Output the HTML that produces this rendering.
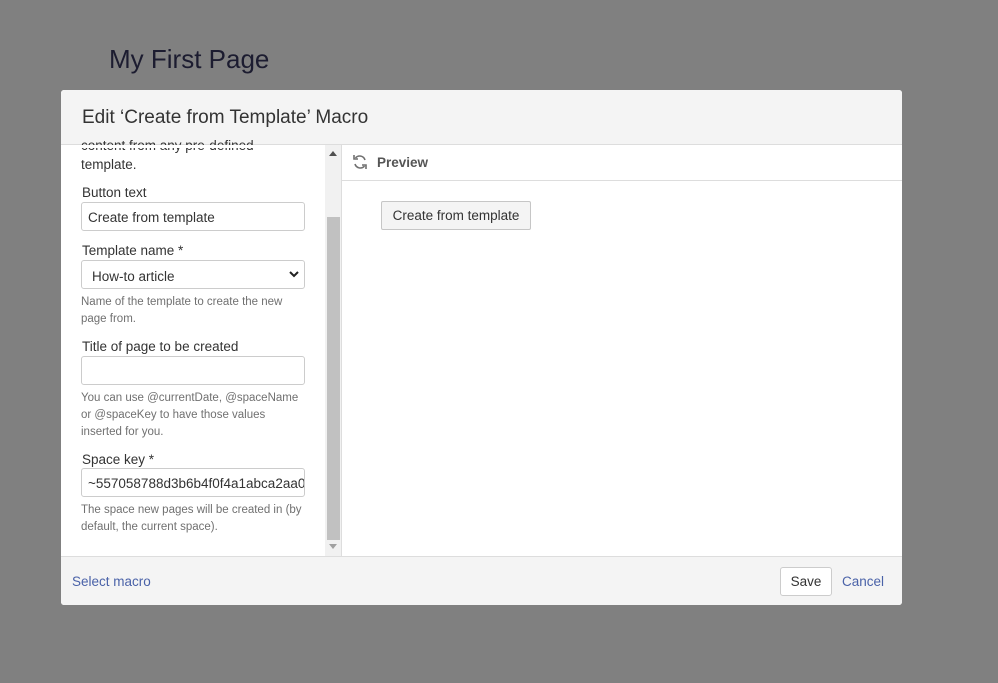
<!DOCTYPE html>
<html><head><meta charset="utf-8"><style>
*{box-sizing:border-box;margin:0;padding:0}
body{width:998px;height:683px;background:#808080;font-family:"Liberation Sans",sans-serif;position:relative;overflow:hidden}
.a{position:absolute}
.title{left:109px;top:44px;font-size:26px;color:#1c1c30}
.dlg{left:61px;top:90px;width:841px;height:515px;background:#fff;border-radius:3px;overflow:hidden}
.hd{left:0;top:0;width:841px;height:55px;background:#f4f4f4;border-bottom:1px solid #ddd}
.hd span{position:absolute;left:21px;top:17px;font-size:19px;color:#333}
.lab{font-size:13.5px;color:#333}
.inp{border:1px solid #ccc;border-radius:3px;background:#fff;font-size:13.5px;color:#333;padding:7px 0 0 6px;height:29px;width:224px;overflow:hidden;white-space:nowrap}
.help{font-size:11.5px;color:#707070;line-height:17px}
.ft{left:0;top:466px;width:841px;height:49px;background:#f4f4f4;border-top:1px solid #ddd}
.link{color:#4a62a8;font-size:13.5px}
</style></head><body>
<div class="a title">My First Page</div>
<div class="a dlg">
 <div class="a hd"><span>Edit ‘Create from Template’ Macro</span></div>
 <div class="a" style="left:20px;top:46px;font-size:13.5px;color:#333;line-height:19px;">content from any pre-defined<br>template.</div>
 <div class="a" style="left:0;top:55px;width:264px;height:3px;background:#fff"></div>
 <div class="a lab" style="left:21px;top:95px">Button text</div>
 <div class="a inp" style="left:20px;top:112px">Create from template</div>
 <div class="a lab" style="left:21px;top:153px">Template name *</div>
 <div class="a inp" style="left:20px;top:170px;padding-left:10px;padding-top:8px">How-to article
  <svg style="position:absolute;right:5px;top:10px" width="10" height="7" viewBox="0 0 10 7"><path d="M1 1l4 4 4-4" fill="none" stroke="#222" stroke-width="2"/></svg></div>
 <div class="a help" style="left:20px;top:204px">Name of the template to create the new<br>page from.</div>
 <div class="a lab" style="left:21px;top:249px">Title of page to be created</div>
 <div class="a inp" style="left:20px;top:266px"></div>
 <div class="a help" style="left:20px;top:300px">You can use @currentDate, @spaceName<br>or @spaceKey to have those values<br>inserted for you.</div>
 <div class="a lab" style="left:21px;top:362px">Space key *</div>
 <div class="a inp" style="left:20px;top:378px;width:224px">~557058788d3b6b4f0f4a1abca2aa0</div>
 <div class="a help" style="left:20px;top:412px">The space new pages will be created in (by<br>default, the current space).</div>
 <div class="a" style="left:264px;top:55px;width:17px;height:411px;background:#f1f1f1"></div>
 <div class="a" style="left:266px;top:127px;width:13px;height:323px;background:#c1c1c1"></div>
 <svg class="a" style="left:268px;top:61px" width="8" height="6"><path d="M0 5h8L4 0z" fill="#505050"/></svg>
 <svg class="a" style="left:268px;top:454px" width="8" height="6"><path d="M0 0h8L4 5z" fill="#a0a0a0"/></svg>
 <div class="a" style="left:280px;top:55px;width:1px;height:411px;background:#ddd"></div>
 <div class="a" style="left:281px;top:90px;width:560px;height:1px;background:#ddd"></div>
 <svg class="a" style="left:291px;top:64px" width="16" height="16" viewBox="0 0 16 16"><path d="M13 6A5.5 5.5 0 0 0 3.5 4M3 10a5.5 5.5 0 0 0 9.5 2" fill="none" stroke="#707070" stroke-width="1.6"/><path d="M2 1v4h4M14 15v-4h-4" fill="none" stroke="#707070" stroke-width="1.6"/></svg>
 <div class="a" style="left:316px;top:65px;font-size:13.5px;font-weight:bold;color:#555">Preview</div>
 <div class="a" style="left:320px;top:111px;width:150px;height:29px;border:1px solid #c6c6c6;border-radius:2px;background:#f4f4f4;font-size:13.5px;color:#333;text-align:center;line-height:27px">Create from template</div>
 <div class="a ft">
  <div class="a link" style="left:11px;top:17px">Select macro</div>
  <div class="a" style="left:719px;top:10px;width:52px;height:29px;border:1px solid #ccc;border-radius:3px;background:#fff;font-size:13.5px;color:#333;text-align:center;line-height:27px">Save</div>
  <div class="a link" style="left:781px;top:17px">Cancel</div>
 </div>
</div>
</body></html>
